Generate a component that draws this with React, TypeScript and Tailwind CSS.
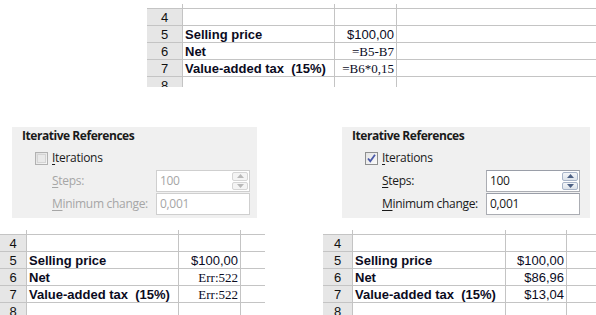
import React from "react";

type SheetProps = {
  headerW: string;
  colA: string;
  colB: string;
  colC: string;
  values: string[];
  valueFont: string;
  lastRow: string;
};

const labels = ["", "Selling price", "Net", "Value-added tax  (15%)"];

function Sheet({ headerW, colA, colB, colC, values, valueFont, lastRow }: SheetProps) {
  const rows = [4, 5, 6, 7];
  return (
    <div className="font-['Liberation_Sans',Arial,sans-serif] text-[13px] text-black">
      {/* stub above row 4: only the column lines show */}
      <div className="flex h-[4px]">
        <div className={`${headerW} border-r border-[#c4c4c4]`} />
        <div className={`${colA} border-r border-[#c4c4c4]`} />
        <div className={`${colB} border-r border-[#c4c4c4]`} />
        <div className={colC} />
      </div>
      <div className="border-t border-[#c4c4c4]">
        {rows.map((r, i) => (
          <div key={r} className="flex h-[17px] border-b border-[#c4c4c4]">
            <div
              className={`${headerW} bg-[#e6e6e6] border-r border-[#c4c4c4] flex items-center justify-center leading-none text-[#111]`}
            >
              {r}
            </div>
            <div
              className={`${colA} border-r border-[#c4c4c4] flex items-center pl-[2px] font-bold whitespace-pre leading-none text-[#0b0b1e]`}
            >
              {labels[i]}
            </div>
            <div
              className={`${colB} border-r border-[#c4c4c4] flex items-center justify-end pr-[2px] leading-none text-[#0b0b1e] ${i === 1 ? "font-['Liberation_Sans',Arial,sans-serif]" : valueFont}`}
            >
              {i === 0 ? "" : values[i - 1]}
            </div>
            <div className={colC} />
          </div>
        ))}
        <div className={`flex ${lastRow} overflow-hidden`}>
          <div
            className={`${headerW} bg-[#e6e6e6] border-r border-[#c4c4c4] flex justify-center leading-[17px] text-[#111]`}
          >
            8
          </div>
          <div className={`${colA} border-r border-[#c4c4c4]`} />
          <div className={`${colB} border-r border-[#c4c4c4]`} />
          <div className={colC} />
        </div>
      </div>
    </div>
  );
}

function Checkbox({ checked }: { checked: boolean }) {
  return (
    <div
      className={`w-[13px] h-[13px] border flex items-center justify-center ${
        checked ? "border-[#8e8f8f] bg-gradient-to-br from-[#e4e4e4] to-[#fafafa]" : "border-[#b1b1b1] bg-gradient-to-br from-[#dedede] to-[#f6f6f6]"
      }`}
    >
      {checked ? (
        <svg width="11" height="11" viewBox="0 0 11 11">
          <path d="M2 5.5 L4.3 8.2 L9 1.8" fill="none" stroke="#4b5aa8" strokeWidth="1.8" />
        </svg>
      ) : (
        <div className="w-[9px] h-[9px] border border-[#d4d4d4] bg-[#e9e9e9]" />
      )}
    </div>
  );
}

function Spinner({ enabled }: { enabled: boolean }) {
  const c = enabled ? "#4d6185" : "#b9b9b9";
  return (
    <div className="flex flex-col w-[16px] h-[18px] gap-[1px] mr-[1px]">
      {[0, 1].map((k) => (
        <div
          key={k}
          className={`flex-1 flex items-center justify-center border rounded-[2px] ${
            enabled ? "border-[#a8b4c8] bg-gradient-to-b from-[#f4f6f9] to-[#dde3ea]" : "border-[#d5d5d5] bg-[#f4f4f4]"
          }`}
        >
          <svg width="7" height="4" viewBox="0 0 7 4">
            <path d={k === 0 ? "M0 4 L3.5 0 L7 4 Z" : "M0 0 L3.5 4 L7 0 Z"} fill={c} />
          </svg>
        </div>
      ))}
    </div>
  );
}

function Panel({ enabled, width }: { enabled: boolean; width: string }) {
  const label = enabled ? "text-[#1a1a1a]" : "text-[#a6a6a6]";
  const inputBorder = enabled ? "border-[#abadb3] border-t-[#9a9ea8]" : "border-[#cfcfcf]";
  return (
    <div className={`${width} h-[91px] bg-[#f0f0f0] pt-[1px] pl-[10px] font-['Open_Sans','Noto_Sans',sans-serif] text-[12px] tracking-[-0.3px]`}>
      <div className="leading-[16px] font-bold text-[#1a1a1a] tracking-[-0.45px]">Iterative References</div>
      <div className="flex items-center h-[16px] mt-[6px] pl-[13px] gap-[4px]">
        <Checkbox checked={enabled} />
        <span className="leading-none text-[#1a1a1a]">
          <span className="underline underline-offset-2">I</span>terations
        </span>
      </div>
      <div className="flex items-center h-[22px] mt-[4px] pl-[30px]">
        <span className={`w-[104px] leading-none ${label}`}>
          <span className="underline underline-offset-2">S</span>teps:
        </span>
        <div className={`w-[94px] h-[22px] border bg-white flex items-center justify-between pl-[3px] ${inputBorder}`}>
          <span className={`leading-none ${label}`}>100</span>
          <Spinner enabled={enabled} />
        </div>
      </div>
      <div className="flex items-center h-[22px] mt-[1px] pl-[30px]">
        <span className={`w-[104px] leading-none ${label}`}>
          <span className="underline underline-offset-2">M</span>inimum change:
        </span>
        <div className={`w-[94px] h-[22px] border bg-white flex items-center pl-[3px] ${inputBorder}`}>
          <span className={`leading-none ${label}`}>0,001</span>
        </div>
      </div>
    </div>
  );
}

export default function App() {
  const serif = "font-['Liberation_Serif','Times_New_Roman',serif]";
  const sans = "font-['Liberation_Sans',Arial,sans-serif]";
  return (
    <div className="w-[596px] h-[315px] overflow-hidden bg-white">
      <div className="pt-[4px] pl-[147px]">
        <Sheet
          headerW="w-[36px]"
          colA="w-[152px]"
          colB="w-[62px]"
          colC="w-[18px]"
          values={["$100,00", "=B5-B7", "=B6*0,15"]}
          valueFont={serif}
          lastRow="h-[10px]"
        />
      </div>
      <div className="flex mt-[40px]">
        <div className="ml-[12px]">
          <Panel enabled={false} width="w-[245px]" />
        </div>
        <div className="ml-[85px]">
          <Panel enabled={true} width="w-[248px]" />
        </div>
      </div>
      <div className="flex mt-[12px]">
        <Sheet
          headerW="w-[27px]"
          colA="w-[152px]"
          colB="w-[62px]"
          colC="w-[24px]"
          values={["$100,00", "Err:522", "Err:522"]}
          valueFont={serif}
          lastRow="h-[17px]"
        />
        <div className="ml-[58px]">
          <Sheet
            headerW="w-[30px]"
            colA="w-[153px]"
            colB="w-[61px]"
            colC="w-[29px]"
            values={["$100,00", "$86,96", "$13,04"]}
            valueFont={sans}
            lastRow="h-[17px]"
          />
        </div>
      </div>
    </div>
  );
}
